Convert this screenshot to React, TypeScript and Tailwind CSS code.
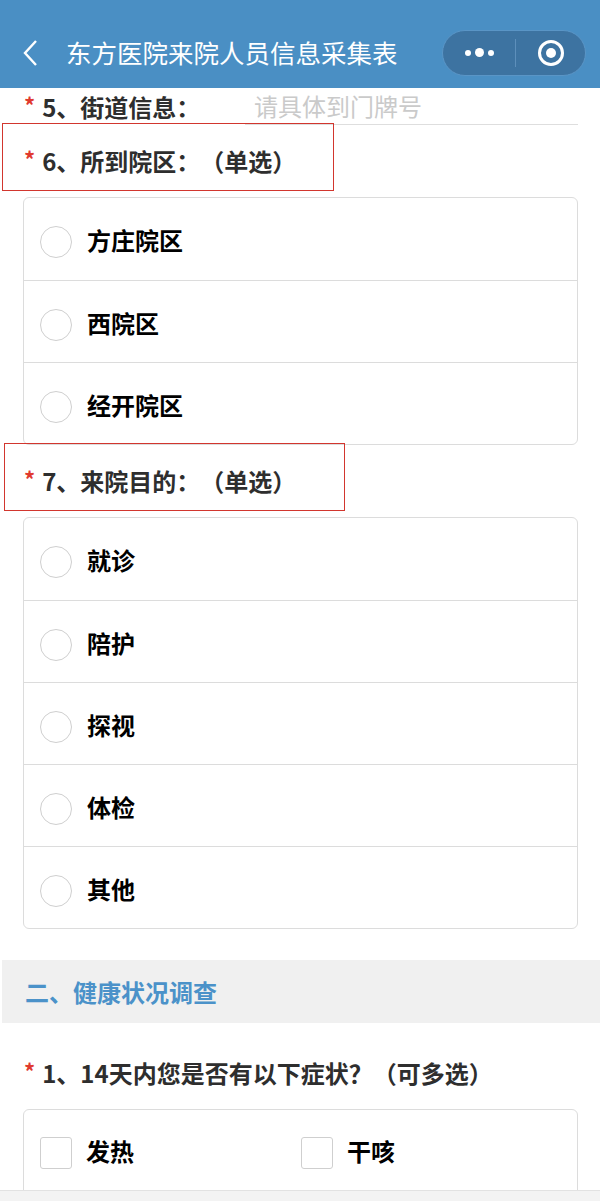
import React from 'react';

const font = { fontFamily: '"Noto Sans CJK SC", "Noto Sans", sans-serif' };

const campusOptions = ['方庄院区', '西院区', '经开院区'];
const purposeOptions = ['就诊', '陪护', '探视', '体检', '其他'];

function Star() {
  return <span className="mr-[7px] self-start pt-[2px] text-[22px] font-bold leading-none text-[#e0392e]">*</span>;
}

function Label({ text }: { text: string }) {
  return (
    <div className="flex items-center whitespace-nowrap">
      <Star />
      <span className="text-[24px] font-bold leading-[32px] text-[#2e2e2e]">{text}</span>
    </div>
  );
}

function Question({ text, boxClass }: { text: string; boxClass?: string }) {
  return (
    <div className="relative flex h-[72px] items-center pl-[24px]">
      {boxClass && <div className={`absolute top-[-2px] h-[68px] border-[1.5px] border-[#d2362e] ${boxClass}`} />}
      <Label text={text} />
    </div>
  );
}

function RadioCard({ options }: { options: string[] }) {
  return (
    <div className="ml-[23px] mr-[22px] overflow-hidden rounded-[6px] border border-[#dcdcdc]">
      {options.map((opt, i) => (
        <div
          key={opt}
          className={`box-border flex h-[82px] items-center pl-[16px] pt-[6px] ${i > 0 ? 'border-t border-[#dcdcdc]' : ''}`}
        >
          <div className="h-[32px] w-[32px] rounded-full border-[1.5px] border-[#cfcfcf]" />
          <span className="mb-[4px] ml-[15px] text-[24px] font-bold leading-[32px] text-black">{opt}</span>
        </div>
      ))}
    </div>
  );
}

export default function App() {
  return (
    <div
      className="relative h-[1201px] w-[600px] overflow-hidden bg-white [text-spacing-trim:space-all]"
      style={font}
    >
      {/* nav bar */}
      <div className="flex h-[88px] items-center bg-[#4a8fc4] pt-[17px]">
        <svg width="20" height="28" viewBox="0 0 20 28" className="ml-[21px]">
          <polyline points="15,2 4,14 15,26" fill="none" stroke="white" strokeWidth="2.4" />
        </svg>
        <span className="ml-[25px] whitespace-nowrap text-[25.5px] text-white">东方医院来院人员信息采集表</span>
        <div className="ml-auto mr-[14px] flex h-[46px] w-[144px] shrink-0 items-center rounded-full border border-[#5a95c6] bg-[#3d73a1]">
          <div className="flex w-[72px] items-center justify-center gap-[4px]">
            <span className="h-[6px] w-[6px] rounded-full bg-white" />
            <span className="h-[9px] w-[9px] rounded-full bg-white" />
            <span className="h-[6px] w-[6px] rounded-full bg-white" />
          </div>
          <div className="h-[28px] w-px bg-[#5d8fbb]" />
          <div className="flex flex-1 items-center justify-center">
            <svg width="28" height="28" viewBox="0 0 28 28">
              <circle cx="14" cy="14" r="11.5" fill="none" stroke="white" strokeWidth="3" />
              <circle cx="14" cy="14" r="5" fill="white" />
            </svg>
          </div>
        </div>
      </div>

      {/* 5 street */}
      <div className="flex h-[37px] items-end">
        <div className="flex w-[245px] items-center pb-[2px] pl-[24px]">
          <Label text="5、街道信息：" />
        </div>
        <div className="mr-[22px] flex-1 border-b border-[#dedede] pb-[2px] pl-[9px] text-[24px] leading-[32px] text-[#cacaca]">
          请具体到门牌号
        </div>
      </div>

      <Question text="6、所到院区：（单选）" boxClass="left-[2px] w-[332px]" />
      <RadioCard options={campusOptions} />

      <Question text="7、来院目的：（单选）" boxClass="left-[4px] w-[341px]" />
      <RadioCard options={purposeOptions} />

      {/* section 2 */}
      <div className="ml-[2px] mt-[31px] flex h-[63px] items-center bg-[#f0f0f0] pl-[23px]">
        <span className="text-[24px] font-bold text-[#4b92c9]">二、健康状况调查</span>
      </div>

      <div className="flex h-[86px] items-center pl-[24px] pt-[14px]">
        <Label text="1、14天内您是否有以下症状？（可多选）" />
      </div>

      <div className="ml-[23px] mr-[22px] h-[200px] rounded-[6px] border border-[#dcdcdc]">
        <div className="flex pt-[25px]">
          {['发热', '干咳'].map((opt, i) => (
            <div key={opt} className={`flex items-center pl-[16px] ${i === 0 ? 'w-[261px]' : ''}`}>
              <div className="h-[32px] w-[32px] rounded-[3px] border-[1.5px] border-[#cfcfcf]" />
              <span className="mb-[3px] ml-[14px] text-[24px] font-bold leading-[32px] text-black">{opt}</span>
            </div>
          ))}
        </div>
      </div>

      {/* bottom bar */}
      <div className="fixed bottom-0 left-0 h-[11px] w-[600px] border-t border-[#e2e2e2] bg-[#f3f3f3]" />
    </div>
  );
}
